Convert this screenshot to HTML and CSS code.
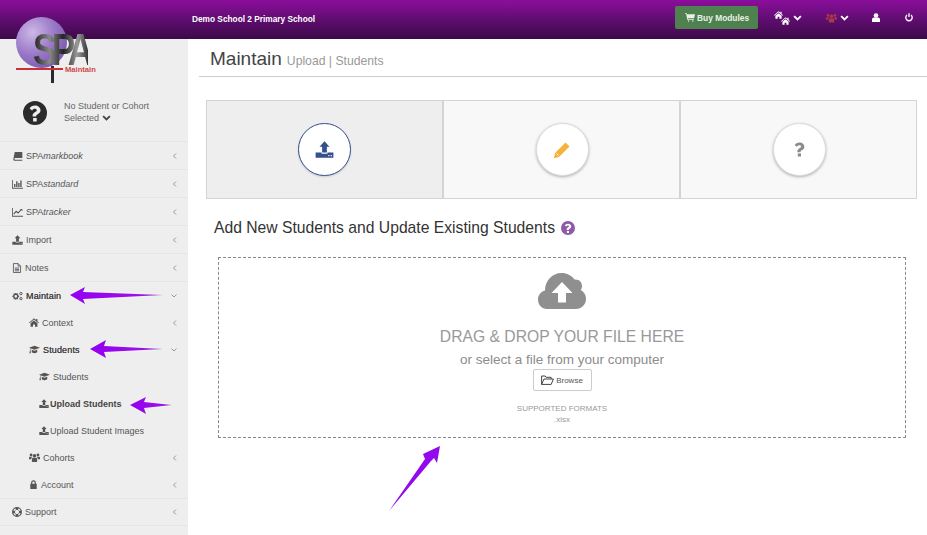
FILE: index.html
```html
<!DOCTYPE html>
<html lang="en" dir="ltr">
  <head>
    <meta charset="utf-8">
    <title>SPA Maintain</title>
    <meta name='viewport' content='width=device-width, initial-scale=1'>
    <link rel="stylesheet" href="styles.css">
  </head>
  <body>
    <svg class="Icon-Defs" width="0" height="0">
      <defs>
        <symbol id="i-book" viewBox="0 0 16 14"><path d="M4 1h11v9H5c-1 0-1.500.7-1.500 1.200S4 12.500 5 12.500h10V14H4.500C2.500 14 1.500 12.800 2 11Z"/></symbol>
        <symbol id="i-bars" viewBox="0 0 16 14"><path d="M0 1h1.200v11.600H16V14H0ZM3 7h2v4.500H3ZM6 3h2v8.500H6ZM9 5.500h2v6H9ZM12 2h2v9.500h-2Z"/></symbol>
        <symbol id="i-line" viewBox="0 0 16 14"><path d="M0 1h1.200v11.600H16V14H0Z"/><path d="M2.500 10 6 6l3 2.500 3.800-4.500" fill="none" stroke="currentColor" stroke-width="1.600"/><path d="M11.500 2.500H15V6Z"/></symbol>
        <symbol id="i-upload" viewBox="0 0 16 14"><path fill-rule="evenodd" d="M8 0l4.200 4.600H10V9.500H6V4.600H3.800ZM.5 9.500H5.500V10.500H10.500V9.500H15.500V14H.5ZM11.200 11.600v1h1v-1ZM13.200 11.600v1h1v-1Z"/></symbol>
        <symbol id="i-note" viewBox="0 0 14 14"><path fill="none" stroke="currentColor" stroke-width="1.200" d="M2 .8h6.500L12 4.300v9H2Z M8.500.8v3.500H12 M4 7h6 M4 9h6 M4 11h6"/></symbol>
        <symbol id="i-cogs" viewBox="0 0 16 14"><circle cx="5.500" cy="7.500" r="3" fill="none" stroke="currentColor" stroke-width="2"/><path d="M4.600 2.600h1.800v1.800H4.600ZM4.600 10.600h1.800v1.800H4.600ZM.6 6.600h1.800v1.800H.6ZM8.600 6.600h1.800v1.800H8.600ZM2 3.600 3.300 2.900 4 4.200 2.800 5ZM7 4.200 7.700 2.900 9 3.600 8.200 5ZM2.800 10 4 10.800 3.300 12.100 2 11.400ZM8.200 10 9 11.400 7.700 12.100 7 10.800Z"/><circle cx="13" cy="3.500" r="1.700" fill="none" stroke="currentColor" stroke-width="1.400"/><circle cx="13" cy="10.800" r="1.700" fill="none" stroke="currentColor" stroke-width="1.400"/></symbol>
        <symbol id="i-home" viewBox="0 0 14 12"><path d="M7 0l3 2.600V1h1.800v3.200L14 6.200l-.8.800L7 1.800.8 7 0 6.200ZM2.200 7.200 7 3.200l4.800 4V12H8.400V8.800H5.600V12H2.200Z"/></symbol>
        <symbol id="i-grad" viewBox="0 0 16 12"><path d="M8 .5 16 3.500 8 6.500 2.800 4.600c-.5.500-.7 1.400-.8 2.400.3.200.4.500.3.800L2.800 11.500H.6L1.200 7.800c-.1-.3 0-.6.300-.8.100-1.200.3-2.200.8-2.800L0 3.500ZM4 6.300 8 7.800l4-1.500v3c0 1-1.800 2-4 2s-4-1-4-2Z"/></symbol>
        <symbol id="i-users" viewBox="0 0 16 13"><circle cx="8" cy="4" r="2.600"/><circle cx="3" cy="2.800" r="2"/><circle cx="13" cy="2.800" r="2"/><path d="M4.200 13V9.500C4.200 8 5 7 6 7h4c1 0 1.800 1 1.800 2.500V13ZM0 9V7c0-1 .7-1.700 1.500-1.700H4.800C4 6 3.300 7 3.200 9ZM16 9V7c0-1-.7-1.700-1.500-1.700H11.200C12 6 12.700 7 12.800 9Z"/></symbol>
        <symbol id="i-lock" viewBox="0 0 12 14"><path d="M1 6h1.300V4a3.700 3.700 0 0 1 7.400 0v2H11v8H1ZM4.200 6h3.600V4a1.800 1.800 0 0 0-3.600 0Z"/></symbol>
        <symbol id="i-support" viewBox="0 0 14 14"><path fill-rule="evenodd" d="M7 0a7 7 0 1 1 0 14A7 7 0 0 1 7 0Zm0 4a3 3 0 1 0 0 6 3 3 0 0 0 0-6ZM4.800 1.800a5.700 5.700 0 0 0-3 3L3.500 5.600a4 4 0 0 1 2.100-2.100Zm4.400 0-.8 1.700a4 4 0 0 1 2.100 2.100l1.700-.8a5.700 5.700 0 0 0-3-3ZM3.500 8.400l-1.700.8a5.700 5.700 0 0 0 3 3l.8-1.700a4 4 0 0 1-2.100-2.100Zm7 0a4 4 0 0 1-2.100 2.100l.8 1.700a5.700 5.700 0 0 0 3-3Z"/></symbol>
        <symbol id="i-left" viewBox="0 0 6 8"><path d="M4 1.500 1.500 4 4 6.500" fill="none" stroke="currentColor" stroke-width="1"/></symbol>
        <symbol id="i-down" viewBox="0 0 8 6"><path d="M1.500 1.500 4 4l2.500-2.500" fill="none" stroke="currentColor" stroke-width="1"/></symbol>
        <symbol id="i-chev" viewBox="0 0 12 8"><path d="M1.500 1.500 6 6l4.500-4.500" fill="none" stroke="currentColor" stroke-width="2.400"/></symbol>
        <symbol id="i-question" viewBox="0 0 24 24"><path fill-rule="evenodd" d="M12 0a12 12 0 1 1 0 24 12 12 0 0 1 0-24Zm-1.900 17v3.400h3.600V17Zm2-12.400c-2.600 0-4.600 1.200-5.500 3l2.500 1.800c.6-1 1.500-1.700 2.700-1.700 1.100 0 2 .6 2 1.500 0 .9-.7 1.300-1.700 1.900-1.400.8-2.500 1.700-2.500 3.700v.8h3.600v-.5c0-.9.500-1.200 1.500-1.800 1.400-.8 2.800-1.900 2.800-4 0-2.900-2.800-4.700-5.400-4.700Z"/></symbol>
      </defs>
    </svg>

    <div class="Top-Bar">
      <div class="School-Name">Demo School 2 Primary School</div>
      <div class="Top-Actions">
        <div class="Buy-Btn">
          <svg width="10" height="9" viewBox="0 0 14 12" fill="currentColor"><path d="M0 0h2.500l.4 1.500H14l-1.300 5.600H4.200l.3 1.200h8v1.200H3.400L1.600 1.200H0Z"/><circle cx="5" cy="11" r="1"/><circle cx="11" cy="11" r="1"/></svg>
          Buy Modules
        </div>
        <div class="Top-Item Top-Homes">
          <span class="Two-Homes">
            <svg class="Home-A" width="9" height="8"><use href="#i-home"/></svg>
            <svg class="Home-B" width="9" height="8"><use href="#i-home"/></svg>
          </span>
          <svg width="9" height="6"><use href="#i-chev"/></svg>
        </div>
        <div class="Top-Item Top-Users">
          <svg class="Users-Red" width="11" height="10"><use href="#i-users"/></svg>
          <svg width="9" height="6"><use href="#i-chev"/></svg>
        </div>
        <div class="Top-Item Top-User">
          <svg width="8" height="9" viewBox="0 0 9 10" fill="currentColor"><circle cx="4.500" cy="2.800" r="2.600"/><path d="M0 10V7.500C0 6 1 5 2 5h5c1 0 2 1 2 2.500V10Z"/></svg>
        </div>
        <div class="Top-Item Top-Power">
          <svg width="8" height="9" viewBox="0 0 9 10"><path d="M2.300 2.200a3.600 3.600 0 1 0 4.400 0M4.500 .3v4.200" fill="none" stroke="currentColor" stroke-width="1.500"/></svg>
        </div>
      </div>
    </div>

    <div class="Page">
      <div class="Side-Bar">
        <div class="Student-Box">
          <svg class="Student-Icon" width="24" height="24"><use href="#i-question"/></svg>
          <div class="Student-Text">No Student or Cohort<br>Selected <svg width="9" height="6"><use href="#i-chev"/></svg></div>
        </div>
        <div class="Menu-Item"><svg class="Menu-Icon" width="11" height="10"><use href="#i-book"/></svg><span>SPA<i>markbook</i></span><svg class="Caret" width="6" height="8"><use href="#i-left"/></svg></div>
        <div class="Menu-Item"><svg class="Menu-Icon" width="11" height="10"><use href="#i-bars"/></svg><span>SPA<i>standard</i></span><svg class="Caret" width="6" height="8"><use href="#i-left"/></svg></div>
        <div class="Menu-Item"><svg class="Menu-Icon" width="11" height="10"><use href="#i-line"/></svg><span>SPA<i>tracker</i></span><svg class="Caret" width="6" height="8"><use href="#i-left"/></svg></div>
        <div class="Menu-Item"><svg class="Menu-Icon" width="11" height="10"><use href="#i-upload"/></svg><span>Import</span><svg class="Caret" width="6" height="8"><use href="#i-left"/></svg></div>
        <div class="Menu-Item"><svg class="Menu-Icon" width="10" height="10"><use href="#i-note"/></svg><span>Notes</span><svg class="Caret" width="6" height="8"><use href="#i-left"/></svg></div>
        <div class="Menu-Group">
          <div class="Menu-Sub Level-0"><svg class="Menu-Icon" width="11" height="10"><use href="#i-cogs"/></svg><span class="Strong">Maintain</span><svg class="Caret" width="8" height="6"><use href="#i-down"/></svg></div>
          <div class="Menu-Sub Level-1"><svg class="Menu-Icon" width="10" height="9"><use href="#i-home"/></svg><span>Context</span><svg class="Caret" width="6" height="8"><use href="#i-left"/></svg></div>
          <div class="Menu-Sub Level-1"><svg class="Menu-Icon" width="11" height="9"><use href="#i-grad"/></svg><span class="Strong">Students</span><svg class="Caret" width="8" height="6"><use href="#i-down"/></svg></div>
          <div class="Menu-Sub Level-2"><svg class="Menu-Icon" width="11" height="9"><use href="#i-grad"/></svg><span>Students</span></div>
          <div class="Menu-Sub Level-2"><svg class="Menu-Icon Icon-Tight" width="10" height="9"><use href="#i-upload"/></svg><b>Upload Students</b></div>
          <div class="Menu-Sub Level-2"><svg class="Menu-Icon Icon-Tight" width="10" height="9"><use href="#i-upload"/></svg><span>Upload Student Images</span></div>
          <div class="Menu-Sub Level-1"><svg class="Menu-Icon" width="11" height="9"><use href="#i-users"/></svg><span>Cohorts</span><svg class="Caret" width="6" height="8"><use href="#i-left"/></svg></div>
          <div class="Menu-Sub Level-1"><svg class="Menu-Icon" width="9" height="9"><use href="#i-lock"/></svg><span>Account</span><svg class="Caret" width="6" height="8"><use href="#i-left"/></svg></div>
        </div>
        <div class="Menu-Item Menu-Last"><svg class="Menu-Icon" width="10" height="10"><use href="#i-support"/></svg><span>Support</span><svg class="Caret" width="6" height="8"><use href="#i-left"/></svg></div>
      </div>

      <div class="Content">
        <div class="Page-Title"><span class="Title-Main">Maintain</span><span class="Title-Sub">Upload | Students</span></div>

        <div class="Step-Row">
          <div class="Step Step-Active">
            <div class="Step-Circle Circle-Active"><svg width="19" height="17"><use href="#i-upload"/></svg></div>
          </div>
          <div class="Step">
            <div class="Step-Circle Circle-Edit">
              <svg width="18" height="18" viewBox="0 0 18 18" fill="currentColor"><path d="M12.500 1.500 16.500 5.500 6 16l-5 1.200L2 12Z"/><path d="M3.500 12.500l2 2" stroke="#fff" stroke-width="1"/></svg>
            </div>
          </div>
          <div class="Step">
            <div class="Step-Circle Circle-Help">
              <svg width="11" height="15" viewBox="6 4 12 17" fill="currentColor"><path d="M10.100 17v3.400h3.600V17Zm2-12.400c-2.600 0-4.600 1.200-5.500 3l2.500 1.800c.6-1 1.500-1.700 2.700-1.700 1.100 0 2 .6 2 1.500 0 .9-.7 1.300-1.700 1.900-1.400.8-2.500 1.700-2.500 3.700v.8h3.600v-.5c0-.9.500-1.200 1.500-1.800 1.400-.8 2.800-1.900 2.800-4 0-2.900-2.800-4.700-5.400-4.700Z"/></svg>
            </div>
          </div>
        </div>

        <div class="Section-Title">Add New Students and Update Existing Students
          <svg class="Section-Help" width="14" height="14"><use href="#i-question"/></svg>
        </div>

        <div class="Drop-Zone">
          <svg class="Drop-Cloud" width="48" height="36" viewBox="0 0 48 36"><path fill="#8f8f8f" d="M9 36C4 36 0 32 0 26.500 0 22 3 18.500 7 17.500 7 8 14 0 23.500 0c5.500 0 10 2.500 13 6.500 4.500-.5 7.500 2.500 7.500 6.500 0 1.500-.5 3-1.300 4C45.800 18.500 48 22 48 26c0 5.500-4.500 10-10 10Z"/><path fill="#fff" d="M24 9l10.500 11H28v9.500h-8V20h-6.500Z"/></svg>
          <div class="Drop-Title">DRAG &amp; DROP YOUR FILE HERE</div>
          <div class="Drop-Sub">or select a file from your computer</div>
          <div class="Browse-Btn">
            <svg width="13" height="10" viewBox="0 0 13 10"><path d="M.6 9.400V1h3.500l1 1.300h5V4M.6 9.400h9.600L12.400 4H3Z" fill="none" stroke="#444" stroke-width="1"/></svg>
            Browse
          </div>
          <div class="Drop-Formats">SUPPORTED FORMATS</div>
          <div class="Drop-Ext">.xlsx</div>
        </div>
      </div>
    </div>

    <!-- logo and the arrows sit over the page -->
    <div class="Logo">
      <div class="Logo-Ball"></div>
      <div class="Logo-Stem"></div>
      <div class="Logo-Text">SPA</div>
      <div class="Logo-Line"></div>
      <div class="Logo-Name">Maintain</div>
    </div>

    <svg class="Arrows" width="927" height="535" viewBox="0 0 927 535">
      <defs>
        <linearGradient id="fade" x1="0" x2="1" y1="0" y2="0">
          <stop offset="0" stop-color="#9400f0"/>
          <stop offset="0.7" stop-color="#9a10e8"/>
          <stop offset="1" stop-color="#8a40c0"/>
        </linearGradient>
      </defs>
      <path class="Arrow-Shape" d="M70 295 85 287 83 292 163 295 83 299 85 304Z"/>
      <path class="Arrow-Shape" d="M90 349 106 340 104 346 163 349 104 352 106 358Z"/>
      <path class="Arrow-Shape" d="M130 405 146 397 144 402 172 405 144 408 146 414Z"/>
      <path fill="#9408ee" d="M389 511 425 459 423 454 440 446 437 463 434 458 431 461Z"/>
    </svg>
  </body>
</html>
```

FILE: styles.css
```css
body {
  margin: 0;
  padding: 0;
  width: 927px;
  height: 535px;
  overflow: hidden;
  position: relative;
  background: #fff;
  font-family: "Liberation Sans", Arial, sans-serif;
  color: #555;
}

.Icon-Defs {
  position: absolute;
}

svg {
  fill: currentColor;
}

/* top bar */
.Top-Bar {
  display: flex;
  align-items: center;
  justify-content: space-between;
  height: 39px;
  padding-left: 192px;
  background: linear-gradient(to bottom, #8b0e9c 0%, #5f0d70 50%, #3c0a48 100%);
  color: #fff;
}

.School-Name {
  font-size: 8.3px;
  font-weight: bold;
  margin-top: -2px;
}

.Top-Actions {
  display: flex;
  align-items: center;
  margin-top: -4px;
}

.Buy-Btn {
  display: flex;
  align-items: center;
  gap: 2px;
  width: 83px;
  height: 23px;
  box-sizing: border-box;
  padding-left: 10px;
  background: #4f8150;
  border-radius: 2px;
  font-size: 8.4px;
  font-weight: bold;
  color: #eaf2e6;
}

.Top-Item {
  display: flex;
  align-items: center;
  gap: 3px;
}

.Top-Homes {
  margin-left: 16px;
}

.Two-Homes {
  position: relative;
  display: block;
  width: 16px;
  height: 13px;
}

.Home-A {
  position: absolute;
  left: 0;
  top: 0;
}

.Home-B {
  position: absolute;
  left: 7px;
  top: 6px;
}

.Top-Users {
  margin-left: 24px;
}

.Users-Red {
  color: #a83a4a;
}

.Top-User {
  margin-left: 23px;
}

.Top-Power {
  margin-left: 25px;
  margin-right: 14px;
}

/* page */
.Page {
  display: flex;
  height: 496px;
}

.Side-Bar {
  flex: none;
  width: 188px;
  background: #eee;
  font-size: 9px;
  color: #555;
}

.Student-Box {
  display: flex;
  align-items: flex-start;
  height: 103px;
  box-sizing: border-box;
  padding: 61px 0 0 23px;
  border-bottom: 1px solid #e6e6e6;
}

.Student-Icon {
  color: #2b2b2b;
  flex: none;
  margin-top: 1px;
}

.Student-Text {
  margin-left: 17px;
  line-height: 12px;
  font-size: 9px;
  color: #666;
}

.Student-Text svg {
  color: #444;
}

.Menu-Item {
  display: flex;
  align-items: center;
  height: 28px;
  box-sizing: border-box;
  padding-left: 12px;
  border-bottom: 1px solid #e6e6e6;
}

.Menu-Last {
  height: 28px;
  border-top: 1px solid #e6e6e6;
}

.Menu-Sub {
  display: flex;
  align-items: center;
  height: 27px;
  box-sizing: border-box;
}

.Level-0 {
  padding: 1px 0 0 12px;
}

.Level-1 {
  padding-left: 29px;
}

.Level-2 {
  padding-left: 39px;
}

.Menu-Icon {
  flex: none;
  margin-right: 3px;
  color: #555;
}

.Icon-Tight {
  margin-right: 1px;
}

.Strong {
  color: #444;
  text-shadow: 0 0 0 #444;
  letter-spacing: 0.15px;
}

.Menu-Item i {
  font-style: italic;
}

.Menu-Item > span:first-of-type,
.Menu-Sub > span:first-of-type,
.Menu-Sub > b {
  flex: 1;
}

.Menu-Sub > b {
  color: #444;
}

.Caret {
  flex: none;
  margin-right: 10px;
  color: #999;
}

/* content */
.Content {
  flex: 1;
  padding-left: 11px;
  min-width: 0;
}

.Page-Title {
  display: flex;
  align-items: baseline;
  height: 38px;
  box-sizing: border-box;
  padding: 9px 0 0 11px;
  border-bottom: 1px solid #ccc;
}

.Title-Main {
  font-size: 19px;
  color: #444;
}

.Title-Sub {
  margin-left: 5px;
  font-size: 12.2px;
  color: #999;
}

.Step-Row {
  display: flex;
  margin: 23px 10px 0 7px;
  height: 99px;
  box-sizing: border-box;
  border: 1px solid #d4d4d4;
  background: #f8f8f8;
}

.Step {
  flex: 1;
  display: flex;
  align-items: center;
  justify-content: center;
  border-left: 2px solid #d4d4d4;
}

.Step:first-child {
  border-left: none;
}

.Step-Active {
  background: #eee;
}

.Step-Circle {
  display: flex;
  align-items: center;
  justify-content: center;
  width: 53px;
  height: 53px;
  box-sizing: border-box;
  margin-left: 1px;
  border-radius: 50%;
  background: #fff;
  box-shadow: 0 1px 3px rgba(0, 0, 0, 0.3);
  border: 1px solid #ddd;
}

.Circle-Active {
  margin-left: 0;
  border: 1px solid #34508f;
  color: #34508f;
  box-shadow: 0 1px 2px rgba(0, 0, 0, 0.15);
}

.Circle-Edit {
  color: #f5b33c;
}

.Circle-Help {
  color: #8a8a8a;
}

.Section-Title {
  display: flex;
  align-items: center;
  gap: 6px;
  margin: 19px 0 0 15px;
  height: 20px;
  font-size: 15.7px;
  color: #333;
}

.Section-Help {
  color: #8e5aa8;
}

.Drop-Zone {
  display: flex;
  flex-direction: column;
  align-items: center;
  width: 688px;
  height: 181px;
  box-sizing: border-box;
  margin: 19px 0 0 19px;
  border: 1px dashed #888;
  color: #999;
}

.Drop-Cloud {
  margin-top: 15px;
}

.Drop-Title {
  margin-top: 18px;
  font-size: 15.7px;
  line-height: 20px;
  color: #999;
}

.Drop-Sub {
  margin-top: 4px;
  font-size: 13.5px;
  line-height: 17px;
  color: #8c8c8c;
}

.Browse-Btn {
  display: flex;
  align-items: center;
  justify-content: center;
  gap: 2px;
  width: 59px;
  height: 22px;
  box-sizing: border-box;
  margin-top: 1px;
  border: 1px solid #ccc;
  border-radius: 2px;
  font-size: 8px;
  color: #555;
}

.Drop-Formats {
  margin-top: 12px;
  font-size: 8px;
  line-height: 11px;
  color: #999;
}

.Drop-Ext {
  font-size: 8px;
  line-height: 11px;
  color: #999;
}

/* logo over the bar and sidebar */
.Logo {
  position: absolute;
  left: 0;
  top: 0;
  width: 110px;
  height: 90px;
}

.Logo-Ball {
  position: absolute;
  left: 16px;
  top: 17px;
  width: 51px;
  height: 51px;
  border-radius: 50%;
  background: radial-gradient(circle at 32% 30%, #cdb8e6 0%, #9a78c8 45%, #6a45a0 100%);
}

.Logo-Text {
  position: absolute;
  left: 33px;
  top: 34px;
  font-size: 44px;
  font-weight: bold;
  line-height: 31px;
  letter-spacing: -6px;
  transform: scaleX(0.8);
  transform-origin: left top;
  background: linear-gradient(to right, #1d1d1d 0%, #8a8a8a 30%, #222 55%, #9a9a9a 80%, #333 100%);
  -webkit-background-clip: text;
  background-clip: text;
  color: transparent;
}

.Logo-Line {
  position: absolute;
  left: 16px;
  top: 68px;
  width: 47px;
  height: 2px;
  background: #c8303a;
}

.Logo-Stem {
  position: absolute;
  left: 51px;
  top: 66px;
  width: 3px;
  height: 17px;
  background: #2a2a2a;
}

.Logo-Name {
  position: absolute;
  left: 65px;
  top: 66px;
  font-size: 7.6px;
  line-height: 8px;
  font-weight: bold;
  color: #cf4a48;
}

/* purple arrows */
.Arrows {
  position: absolute;
  left: 0;
  top: 0;
  pointer-events: none;
}

.Arrow-Shape {
  fill: url(#fade);
  filter: drop-shadow(0 0 1px #fff);
}
```
